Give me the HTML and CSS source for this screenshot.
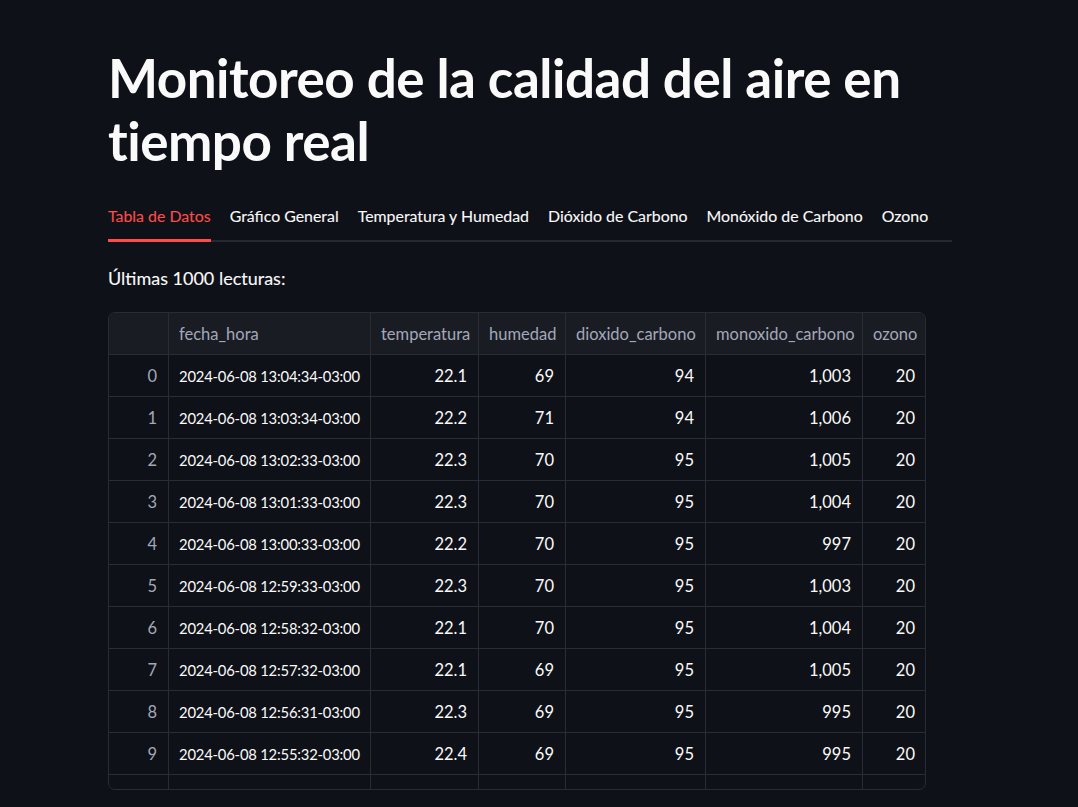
FILE: index.html
```html
<!DOCTYPE html>
<html lang="es">
<head>
<meta charset="utf-8">
<title>Monitoreo</title>
<link rel="stylesheet" href="styles.css">
</head>
<body>
<main class="container">
  <h1 class="title">Monitoreo de la calidad del aire en tiempo real</h1>
  <nav class="tabs">
    <div class="tab active">Tabla de Datos</div>
    <div class="tab">Gráfico General</div>
    <div class="tab">Temperatura y Humedad</div>
    <div class="tab">Dióxido de Carbono</div>
    <div class="tab">Monóxido de Carbono</div>
    <div class="tab">Ozono</div>
  </nav>
  <p class="caption">Últimas 1000 lecturas:</p>
  <div class="grid-wrap">
    <table class="grid">
      <colgroup>
        <col style="width:60px"><col style="width:202px"><col style="width:108px"><col style="width:87px"><col style="width:140px"><col style="width:157px"><col style="width:64px">
      </colgroup>
      <thead>
        <tr><th class="idx"></th><th>fecha_hora</th><th>temperatura</th><th>humedad</th><th>dioxido_carbono</th><th>monoxido_carbono</th><th>ozono</th></tr>
      </thead>
      <tbody>
        <tr><td class="idx">0</td><td class="l">2024-06-08 13:04:34-03:00</td><td>22.1</td><td>69</td><td>94</td><td>1,003</td><td>20</td></tr>
        <tr><td class="idx">1</td><td class="l">2024-06-08 13:03:34-03:00</td><td>22.2</td><td>71</td><td>94</td><td>1,006</td><td>20</td></tr>
        <tr><td class="idx">2</td><td class="l">2024-06-08 13:02:33-03:00</td><td>22.3</td><td>70</td><td>95</td><td>1,005</td><td>20</td></tr>
        <tr><td class="idx">3</td><td class="l">2024-06-08 13:01:33-03:00</td><td>22.3</td><td>70</td><td>95</td><td>1,004</td><td>20</td></tr>
        <tr><td class="idx">4</td><td class="l">2024-06-08 13:00:33-03:00</td><td>22.2</td><td>70</td><td>95</td><td>997</td><td>20</td></tr>
        <tr><td class="idx">5</td><td class="l">2024-06-08 12:59:33-03:00</td><td>22.3</td><td>70</td><td>95</td><td>1,003</td><td>20</td></tr>
        <tr><td class="idx">6</td><td class="l">2024-06-08 12:58:32-03:00</td><td>22.1</td><td>70</td><td>95</td><td>1,004</td><td>20</td></tr>
        <tr><td class="idx">7</td><td class="l">2024-06-08 12:57:32-03:00</td><td>22.1</td><td>69</td><td>95</td><td>1,005</td><td>20</td></tr>
        <tr><td class="idx">8</td><td class="l">2024-06-08 12:56:31-03:00</td><td>22.3</td><td>69</td><td>95</td><td>995</td><td>20</td></tr>
        <tr><td class="idx">9</td><td class="l">2024-06-08 12:55:32-03:00</td><td>22.4</td><td>69</td><td>95</td><td>995</td><td>20</td></tr>
        <tr class="partial"><td class="idx"></td><td></td><td></td><td></td><td></td><td></td><td></td></tr>
      </tbody>
    </table>
  </div>
</main>
</body>
</html>
```

FILE: styles.css
```css
html, body {
  margin: 0;
  padding: 0;
  background: #0e1117;
  color: #fafafa;
  font-family: "Source Sans Pro", Lato, sans-serif;
}

.container {
  width: 844px;
  padding: 46px 0 0 108px;
}

.title {
  margin: 0;
  font-size: 53px;
  line-height: 63px;
  font-weight: 700;
  letter-spacing: -0.5px;
  color: #fafafa;
}

.tabs {
  display: flex;
  gap: 19px;
  margin-top: 20px;
  height: 48px;
  border-bottom: 2px solid #262730;
  align-items: stretch;
}

.tab {
  display: flex;
  align-items: center;
  font-size: 15.9px;
  color: #fafafa;
  white-space: nowrap;
  position: relative;
  padding-bottom: 1px;
  -webkit-text-stroke: 0.1px currentColor;
}

.tab.active {
  color: #ff4b4b;
}

.tab.active::after {
  content: "";
  position: absolute;
  left: 0;
  right: 0;
  bottom: -2px;
  height: 3px;
  background: #ff4b4b;
}

.caption {
  margin: 22px 0 0;
  font-size: 18px;
  line-height: 28px;
  color: #fafafa;
  -webkit-text-stroke: 0.1px currentColor;
}

.grid-wrap {
  margin-top: 20px;
  width: 818px;
  height: 478px;
  border: 1px solid #2a2c35;
  border-radius: 7px;
  overflow: hidden;
  box-sizing: border-box;
}

.grid {
  border-collapse: collapse;
  table-layout: fixed;
  width: 818px;
  margin: -1px 0 0 -1px;
  font-size: 16.5px;
}

.grid th, .grid td {
  height: 41px;
  padding: 0 11px 0 10px;
  border: 1px solid #2a2c35;
  text-align: right;
  white-space: nowrap;
  overflow: hidden;
}

.grid th {
  background: #1a1c24;
  color: #a3a8b8;
  font-weight: 400;
  text-align: left;
}

.grid td.l {
  text-align: left;
  font-size: 14.8px;
  letter-spacing: -0.2px;
}

.grid td.idx {
  color: #a3a8b8;
}

.grid tr.partial td {
  height: 16px;
}
```
